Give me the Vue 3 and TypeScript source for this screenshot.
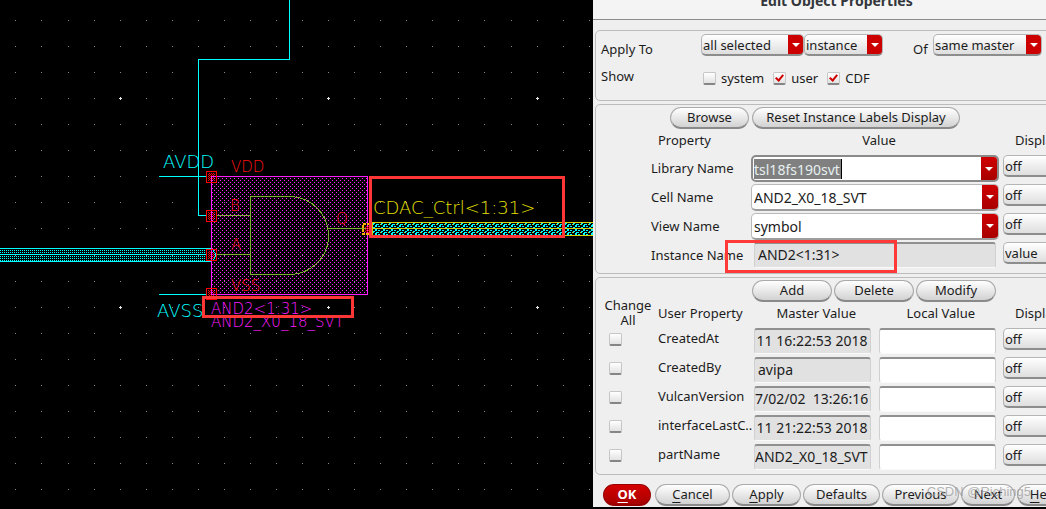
<script setup lang="ts">
import { ref } from 'vue'

interface Point { x: number; y: number }
interface Combo { id: string; label: string; value: string }
interface UserProperty { name: string; master: string; align: 'left' | 'right' }

const pitch = 26.06
const dots: Point[] = []
const crosses: Point[] = []
for (let row = 0; row < 40; row++) {
  for (let col = 0; col < 60; col++) {
    const p = { x: Math.round(15.4 + col * pitch), y: Math.round(20 + row * pitch) }
    if (col % 8 === 4 && row % 8 === 3) crosses.push(p)
    else dots.push(p)
  }
}

const pins: Point[] = [
  { x: 206, y: 171 },
  { x: 206, y: 210 },
  { x: 206, y: 249 },
  { x: 206, y: 288 },
]

const combos = ref<Combo[]>([
  { id: 'lib', label: 'Library Name', value: 'tsl18fs190svt' },
  { id: 'cell', label: 'Cell Name', value: 'AND2_X0_18_SVT' },
  { id: 'view', label: 'View Name', value: 'symbol' },
])

const properties: UserProperty[] = [
  { name: 'CreatedAt', master: '11 16:22:53 2018', align: 'right' },
  { name: 'CreatedBy', master: 'avipa', align: 'left' },
  { name: 'VulcanVersion', master: '7/02/02  13:26:16', align: 'right' },
  { name: 'interfaceLastC..', master: '11 21:22:53 2018', align: 'right' },
  { name: 'partName', master: 'AND2_X0_18_SVT', align: 'right' },
]
</script>

<template>
  <main class="screen">
    <section class="canvas" aria-label="Schematic">
      <svg class="schematic" width="100%" height="100%">
        <defs>
          <pattern id="body" width="4" height="4" patternUnits="userSpaceOnUse">
            <path fill="#ff1cff" d="M0 0h1v1h-1zM2 2h1v1h-1z" />
          </pattern>
          <pattern id="bus" width="2" height="2" patternUnits="userSpaceOnUse">
            <path fill="#00ffff" d="M0 0h1v1h-1z" />
          </pattern>
          <pattern id="pin" width="2" height="2" patternUnits="userSpaceOnUse">
            <path fill="#ff0000" d="M0 0h1v1h-1zM1 1h1v1h-1z" />
          </pattern>
          <pattern id="net" width="8" height="4" patternUnits="userSpaceOnUse">
            <path fill="#00ffff" d="M0 0h3v1h-3zM0 1h1v2h-1zM2 2h2v1h-2zM5 0h1v1h-1zM7 1h1v2h-1zM5 3h2v1h-2z" />
            <path fill="#d8d000" d="M4 0h1v1h-1z" />
          </pattern>
        </defs>

        <g fill="#85859c">
          <rect v-for="(p, i) in dots" :key="i" :x="p.x" :y="p.y" width="1" height="1" />
        </g>
        <g fill="#e6e6e6">
          <path v-for="(p, i) in crosses" :key="i" :d="`M${p.x - 1} ${p.y}h3v1h-3zM${p.x} ${p.y - 1}h1v3h-1z`" />
        </g>

        <g class="line" stroke="#00ffff">
          <path d="M289.500 0V59.500H198.500V215.500H211M159 176.500H211M159 294.500H211" />
          <rect x="-1" y="248" width="212" height="14" fill="url(#bus)" stroke="none" />
          <path d="M0 248.500H211M0 254.500H211M0 261.500H211" />
        </g>

        <g v-for="p in pins" :key="p.y">
          <rect :x="p.x" :y="p.y" width="11" height="11" fill="#000" />
          <rect :x="p.x + 2" :y="p.y + 2" width="7" height="8" fill="url(#pin)" />
        </g>
        <rect x="211.500" y="176.500" width="156" height="118" fill="url(#body)" stroke="#ff1cff" />
        <g class="line" stroke="#7fae35">
          <path d="M250.500 196.500H289.500A39 39 0 0 1 289.500 274.500H250.500ZM216 215.500H250M216 254.500H250M328 228.500H367" />
        </g>
        <rect v-for="p in pins" :key="p.y" :x="p.x + 0.5" :y="p.y + 0.5" width="10" height="11" fill="none" stroke="#ff0000" />
        <path class="line" stroke="#00ffff" d="M213 250.500Q218 255 213 260" />

        <rect x="372" y="223" width="100%" height="12" fill="url(#net)" />
        <g fill="#d8d000">
          <rect x="370" y="222" width="100%" height="1" />
          <rect x="370" y="228" width="100%" height="1" />
          <rect x="370" y="235" width="100%" height="1" />
          <rect x="372" y="222" width="1" height="14" />
        </g>
        <rect x="363" y="224" width="8" height="10" fill="none" stroke="#ffb000" stroke-width="2" stroke-dasharray="3 1" />
        <rect x="365" y="226" width="5" height="7" fill="url(#pin)" />

        <g class="cad large" fill="#00ffff">
          <text x="163" y="168">AVDD</text>
          <text x="157" y="317">AVSS</text>
        </g>
        <text class="cad large" fill="#e8e000" x="373" y="214">CDAC_Ctrl&lt;1:31&gt;</text>
        <g class="cad small" fill="#ff1010">
          <text x="231" y="172">VDD</text>
          <text x="230" y="211">B</text>
          <text x="231" y="250">A</text>
          <text x="336" y="224">Q</text>
          <text x="231" y="291">VSS</text>
        </g>
        <g class="cad small" fill="#ff1cff">
          <text x="211" y="314">AND2&lt;1:31&gt;</text>
          <text x="211" y="327">AND2_X0_18_SVT</text>
        </g>

        <g fill="none" stroke="#ff3636" stroke-width="3">
          <rect x="203.500" y="297.500" width="149" height="19" />
          <rect x="370.500" y="177.500" width="193" height="59" />
        </g>
      </svg>
    </section>

    <section class="side" aria-label="Edit Object Properties">
      <form class="dialog" @submit.prevent>
        <header class="titlebar"><h1>Edit Object Properties</h1></header>

        <fieldset class="group apply">
          <div class="line-row">
            <label class="lead" for="scope">Apply To</label>
            <span class="select scope"><select id="scope"><option>all selected</option></select></span>
            <span class="select kind"><select aria-label="Object type"><option>instance</option></select></span>
            <label class="of" for="master">Of</label>
            <span class="select master"><select id="master"><option>same master</option></select></span>
          </div>
          <div class="show-row">
            <span class="lead">Show</span>
            <label class="check"><input type="checkbox" />system</label>
            <label class="check"><input type="checkbox" checked />user</label>
            <label class="check"><input type="checkbox" checked />CDF</label>
          </div>
        </fieldset>

        <fieldset class="group instance">
          <div class="tools">
            <button type="button" class="pill browse">Browse</button>
            <button type="button" class="pill reset">Reset Instance Labels Display</button>
          </div>
          <div class="props head">
            <span class="prop-title">Property</span><span class="center">Value</span><span class="disp">Display</span>
          </div>
          <div v-for="c in combos" :key="c.id" class="props">
            <label class="name" :for="c.id">{{ c.label }}</label>
            <span class="combo" :class="{ focused: c.id === 'lib' }">
              <span v-if="c.id === 'lib'" class="picked">
                <input :id="c.id" v-model="c.value" type="text" />
              </span>
              <input v-else :id="c.id" v-model="c.value" type="text" />
              <button type="button" class="drop" :aria-label="`Choose ${c.label}`"></button>
            </span>
            <span class="select"><select :aria-label="`${c.label} display`"><option>off</option></select></span>
          </div>
          <div class="props">
            <label class="name" for="inst">Instance Name</label>
            <span class="marked"><input id="inst" class="field grey" type="text" value="AND2&lt;1:31&gt;" /></span>
            <span class="select"><select aria-label="Instance Name display"><option>value</option></select></span>
          </div>
        </fieldset>

        <fieldset class="group user">
          <div class="tools edit">
            <button type="button" class="pill">Add</button>
            <button type="button" class="pill">Delete</button>
            <button type="button" class="pill">Modify</button>
          </div>
          <table>
            <colgroup><col class="c-all" /><col class="c-name" /><col /><col /><col class="c-disp" /></colgroup>
            <thead>
              <tr>
                <th class="all"><div>Change All</div></th>
                <th class="left">User Property</th>
                <th>Master Value</th>
                <th>Local Value</th>
                <th class="disp">Display</th>
              </tr>
            </thead>
            <tbody>
              <tr v-for="p in properties" :key="p.name">
                <td class="tick"><input type="checkbox" :aria-label="`Change all ${p.name}`" /></td>
                <td class="pname">{{ p.name }}</td>
                <td class="m"><input class="field grey" :class="p.align" type="text" :value="p.master" readonly :aria-label="`${p.name} master value`" /></td>
                <td class="l"><input class="field" type="text" :aria-label="`${p.name} local value`" /></td>
                <td><span class="select"><select :aria-label="`${p.name} display`"><option>off</option></select></span></td>
              </tr>
            </tbody>
          </table>
        </fieldset>

        <footer class="actions">
          <button type="submit" class="pill ok"><u>O</u>K</button>
          <button type="button" class="pill cancel"><u>C</u>ancel</button>
          <button type="button" class="pill act"><u>A</u>pply</button>
          <button type="button" class="pill wide">Defaults</button>
          <button type="button" class="pill wide">Previous</button>
          <button type="button" class="pill next">Next</button>
          <button type="button" class="pill help"><u>H</u>elp</button>
        </footer>
      </form>
    </section>
    <span class="watermark">CSDN @Riching5</span>
  </main>
</template>

<style>
body { margin: 0; background: #000; }
</style>

<style scoped>
* { box-sizing: border-box; }
.screen {
  position: relative;
  display: grid;
  grid-template-columns: minmax(0, 593fr) minmax(0, 453fr);
  min-height: 100vh;
  overflow: hidden;
  background: #000;
  color: #1c1c1c;
  font: 13px/18px "Noto Sans", "Open Sans", sans-serif;
}
.canvas { display: flex; overflow: hidden; }
.schematic { display: block; shape-rendering: crispEdges; }
.line { fill: none; }
.cad { font-family: "DejaVu Sans Light", "DejaVu Sans", sans-serif; font-weight: 200; }
.large { font-size: 18px; }
.small { font-size: 15px; }

.side { overflow: hidden; padding-bottom: 2px; }
.dialog { width: calc(100% + 34px); height: 100%; background: #efefef; }
.titlebar { height: 20px; border-bottom: 1px solid #8b8b8b; background: #f4f4f4; overflow: hidden; }
h1 { margin: -9px 0 0; text-align: center; color: #33373b; font-size: 14px; line-height: 20px; font-weight: 700; }

.group { min-width: 0; margin: 0 2px 3px; padding: 3px 3px 0 0; border: 1px solid #bcbcbc; border-radius: 5px; }
.apply { margin-top: 10px; padding-bottom: 11px; }
.line-row, .show-row { display: flex; padding-left: 5px; }
.line-row { height: 22px; }
.lead { width: 100px; }
.line-row label { padding-top: 6px; }
.scope { width: 103px; }
.kind { width: 79px; }
.line-row .of { width: 50px; padding-left: 30px; }
.select.master { width: 109px; }
.show-row { padding-top: 11px; height: 33px; }
.check { display: flex; align-items: center; gap: 5px; height: 22px; margin-right: 9px; }
.check:first-of-type { padding-left: 2px; }

.select { position: relative; display: block; height: 22px; }
.select::after {
  content: "";
  position: absolute;
  top: 9px;
  right: 4px;
  border: 4px solid transparent;
  border-top-color: #fff;
  border-bottom: 0;
  pointer-events: none;
}
select {
  appearance: none;
  display: block;
  width: 100%;
  height: 22px;
  padding: 0 16px 0 1px;
  border: 1px solid #b5b5b5;
  border-bottom: 2px solid #8d8d8d;
  border-radius: 5px;
  background: linear-gradient(#c00, #c00) right / 15px 100% no-repeat, linear-gradient(#fff, #dedede);
  color: inherit;
  font: inherit;
}

input[type="checkbox"] {
  appearance: none;
  width: 13px;
  height: 13px;
  margin: 0;
  border: 1px solid #c6c6c6;
  border-bottom: 2px solid #858585;
  border-radius: 2px;
  background: linear-gradient(#fff, #e2e2e2);
  position: relative;
}
input[type="checkbox"]:checked::after {
  content: "";
  position: absolute;
  left: 3px;
  top: 0;
  width: 3px;
  height: 6px;
  border: solid #d00000;
  border-width: 0 2px 2px 0;
  transform: rotate(40deg);
}

.pill {
  height: 22px;
  padding: 0 0 1px;
  border: 1px solid #aaa;
  border-bottom: 2px solid #8a8a8a;
  border-radius: 11px;
  background: linear-gradient(#fff, #d2d2d2);
  color: inherit;
  font: inherit;
  line-height: 18px;
}
.tools { display: flex; gap: 2px; }
.instance .tools { gap: 3px; padding: 0 0 0 74px; }
.browse { width: 79px; }
.reset { width: 208px; }
.instance { padding-top: 2px; padding-bottom: 2px; }

.props { display: grid; grid-template-columns: 155px minmax(0, 1fr) 71px; height: 29px; }
.props.head { height: 26px; padding-top: 2px; }
.name { padding: 4px 0 0 55px; white-space: nowrap; }
.prop-title { padding-left: 62px; }
.center { padding-left: 4px; text-align: center; }
.disp { padding-left: 12px; }
.combo {
  display: flex;
  height: 27px;
  margin-right: 4px;
  border: 1px solid #b9b9b9;
  border-bottom: 2px solid #9d9d9d;
  border-radius: 5px;
  background: #fff;
  overflow: hidden;
}
.combo.focused { border: 2px solid #8a8a8a; }
.combo input { flex: 1; min-width: 0; width: 100%; height: 100%; padding: 0 0 0 2px; border: 0; outline: 0; background: none; color: inherit; font: inherit; font-size: 14px; }
.picked { flex: 1; height: 20px; margin-top: 2px; }
.combo .picked input { width: 88px; padding: 0; margin-left: 1px; background: #808080; color: #e6f0f0; border-right: 1px solid #000; }
.drop { position: relative; flex: none; width: 16px; padding: 0; border: 0; background: linear-gradient(#d00000, #a80000); }
.drop::after { content: ""; position: absolute; left: 4px; top: 10px; border: 4px solid transparent; border-top-color: #fff; border-bottom: 0; }

.field {
  display: block;
  width: 100%;
  height: 26px;
  padding: 0 3px 2px;
  border: 1px solid #d0d0d0;
  border-top: 2px solid #909090;
  border-bottom: 1px solid #fafafa;
  border-radius: 3px;
  background: #fff;
  color: inherit;
  font: inherit;
  font-size: 14px;
}
.grey { background: #e1e1e1; }
.field.right { padding: 0 2px 2px 0; text-align: right; }
.marked { position: relative; padding: 0 7px 0 3px; }
.marked::after {
  content: "";
  position: absolute;
  left: -26px;
  top: -2px;
  width: 166px;
  height: 27px;
  border: 3px solid #ff3838;
  pointer-events: none;
}

.user { padding-top: 2px; padding-bottom: 1px; }
.edit { padding-left: 156px; }
.edit .pill { width: 80px; }
table { width: 100%; table-layout: fixed; border-collapse: collapse; }
.c-all { width: 62px; }
.c-name { width: 96px; }
.c-disp { width: 71px; }
th, td { padding: 0; font-weight: 400; vertical-align: top; }
th { padding-top: 2px; height: 26px; white-space: nowrap; }
th.all { padding: 0 6px 0 8px; line-height: 15px; white-space: normal; }
th.all div { height: 30px; margin-top: -4px; }
th.left, th.disp { text-align: left; }
th.disp { padding-left: 12px; }
.m { padding-right: 8px; }
.l { padding-right: 7px; }
tbody tr { height: 29px; }
.tick { padding: 5px 0 0 13px; }
.tick input { display: block; }
.pname { padding-top: 1px; white-space: nowrap; }

.actions { display: flex; gap: 2px; padding: 6px 0 0 10px; }
.ok { width: 48px; margin-right: 2px; border-color: #900; background: linear-gradient(#d40000, #a80000); color: #fff; font-weight: 700; }
.cancel { width: 75px; }
.act { width: 69px; }
.wide { width: 77px; }
.next { width: 54px; }
.help { width: 54px; }
u { text-underline-offset: 3px; }

.watermark {
  position: absolute;
  right: 15px;
  bottom: 8px;
  color: #999b;
  font: 13px/18px "Liberation Sans", Arial, sans-serif;
  pointer-events: none;
}
</style>
